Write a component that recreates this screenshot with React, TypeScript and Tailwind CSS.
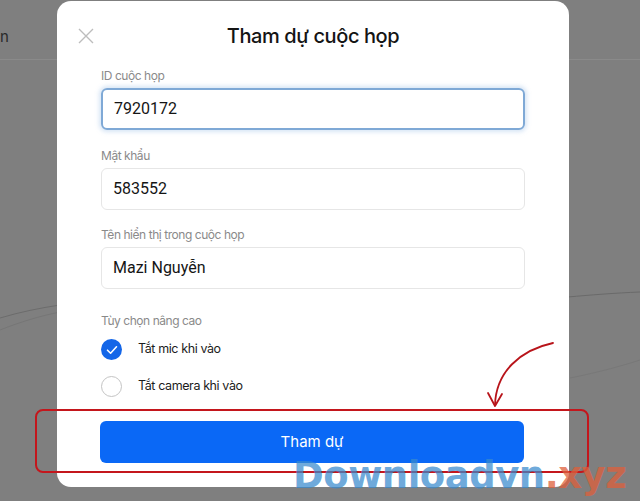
import { useState } from "react";

const Field = ({ label, value, focused }: { label: string; value: string; focused?: boolean }) => (
    <div className="flex flex-col">
        <label className="text-[12px] leading-4 text-[#8a8a8a] tracking-[-0.45px] mb-[4px]">{label}</label>
        <div
            className={
                focused
                    ? "h-[42px] rounded-[6px] border-2 border-[#7fa9d6] shadow-[0_0_4px_2px_rgba(140,180,225,0.35)] flex items-center px-[11px]"
                    : "h-[42px] rounded-[6px] border border-[#e6e6e6] flex items-center px-[11px]"
            }
        >
            <span className="text-[16px] text-[#151515] font-['Roboto',Arial,sans-serif]">{value}</span>
        </div>
    </div>
);

const Option = ({ checked, text, onClick }: { checked: boolean; text: string; onClick: () => void }) => (
    <button onClick={onClick} className="flex items-center gap-[16px] text-left">
        {checked ? (
            <span className="w-[21px] h-[21px] rounded-full bg-[#1466e8] flex items-center justify-center">
                <svg width="12" height="10" viewBox="0 0 12 10" fill="none">
                    <path d="M1.5 5.2 4.6 8.2 10.5 1.8" stroke="white" strokeWidth="1.6" strokeLinecap="round" strokeLinejoin="round" />
                </svg>
            </span>
        ) : (
            <span className="w-[21px] h-[21px] rounded-full border border-[#c4c4c4] bg-white" />
        )}
        <span className="text-[12.5px] tracking-[-0.4px] text-[#1c1c1c]">{text}</span>
    </button>
);

export default function App() {
    const [mic, setMic] = useState(true);
    const [cam, setCam] = useState(false);

    return (
        <div className="relative w-[640px] h-[501px] overflow-hidden bg-[#7f7f7f] font-['Inter','Noto_Sans',sans-serif]">
            {/* page behind the overlay */}
            <div className="h-[60px] border-b border-[#8a8a8a] pt-[24px]">
                <span className="text-[15px] leading-5 text-[#2a2a2a]">n</span>
            </div>
            <svg className="absolute left-0 top-0" width="640" height="501" viewBox="0 0 640 501" fill="none">
                <path d="M0 318 C 20 312, 40 308, 60 305" stroke="#6c6c6c" strokeWidth="1" />
                <path d="M0 330 C 20 322, 40 316, 60 312" stroke="#767676" strokeWidth="1" />
                <path d="M568 297 C 590 295, 615 293, 640 292" stroke="#6a6a6a" strokeWidth="1" />
                <path d="M570 378 C 600 372, 625 365, 640 360" stroke="#787878" strokeWidth="1" />
            </svg>

            {/* modal */}
            <div className="absolute left-[57px] top-[1px] w-[512px] h-[486px] bg-white rounded-[14px] px-[44px] pt-[21px]">
                <div className="relative flex items-center justify-center h-[28px]">
                    <button className="absolute left-[-23px] top-[6px] w-[16px] h-[16px]">
                        <svg width="16" height="16" viewBox="0 0 16 16" fill="none">
                            <path d="M1 1 15 15M15 1 1 15" stroke="#bdbdbd" strokeWidth="1.4" />
                        </svg>
                    </button>
                    <h1 className="text-[20px] text-[#141414] font-medium tracking-[-0.4px]">Tham dự cuộc họp</h1>
                </div>

                <div className="mt-[18px] flex flex-col gap-[17.5px]">
                    <Field label="ID cuộc họp" value="7920172" focused />
                    <Field label="Mật khẩu" value="583552" />
                    <Field label="Tên hiển thị trong cuộc họp" value="Mazi Nguyễn" />
                </div>

                <div className="mt-[24px] text-[12px] tracking-[-0.45px] leading-4 text-[#8a8a8a]">Tùy chọn nâng cao</div>
                <div className="mt-[10px] flex flex-col gap-[16px]">
                    <Option checked={mic} text="Tắt mic khi vào" onClick={() => setMic(!mic)} />
                    <Option checked={cam} text="Tắt camera khi vào" onClick={() => setCam(!cam)} />
                </div>

                <button className="mt-[24px] -ml-[1px] w-[424px] h-[42px] rounded-[6px] bg-[#0a68f6] text-white text-[15px]">
                    Tham dự
                </button>
            </div>

            {/* red annotation */}
            <div className="absolute left-[35px] top-[409px] w-[554px] h-[64px] rounded-[8px] border-2 border-[#c4161c]" />
            <svg className="absolute left-0 top-0" width="640" height="501" viewBox="0 0 640 501" fill="none">
                <path d="M553 343 C 520 350, 496 372, 495 405" stroke="#b8141a" strokeWidth="1.8" strokeLinecap="round" />
                <path d="M488 393 L495 406 L502 394" stroke="#b8141a" strokeWidth="1.8" strokeLinecap="round" strokeLinejoin="round" />
            </svg>

            {/* watermark */}
            <div className="absolute left-[293px] top-[454px] text-[37px] leading-[44px] font-bold font-['DejaVu_Sans',Verdana,sans-serif] tracking-[-0.5px]">
                <span className="text-[rgba(56,138,205,0.72)]">Downloadvn</span>
                <span className="text-[rgba(222,96,60,0.75)]">.xyz</span>
            </div>
        </div>
    );
}
